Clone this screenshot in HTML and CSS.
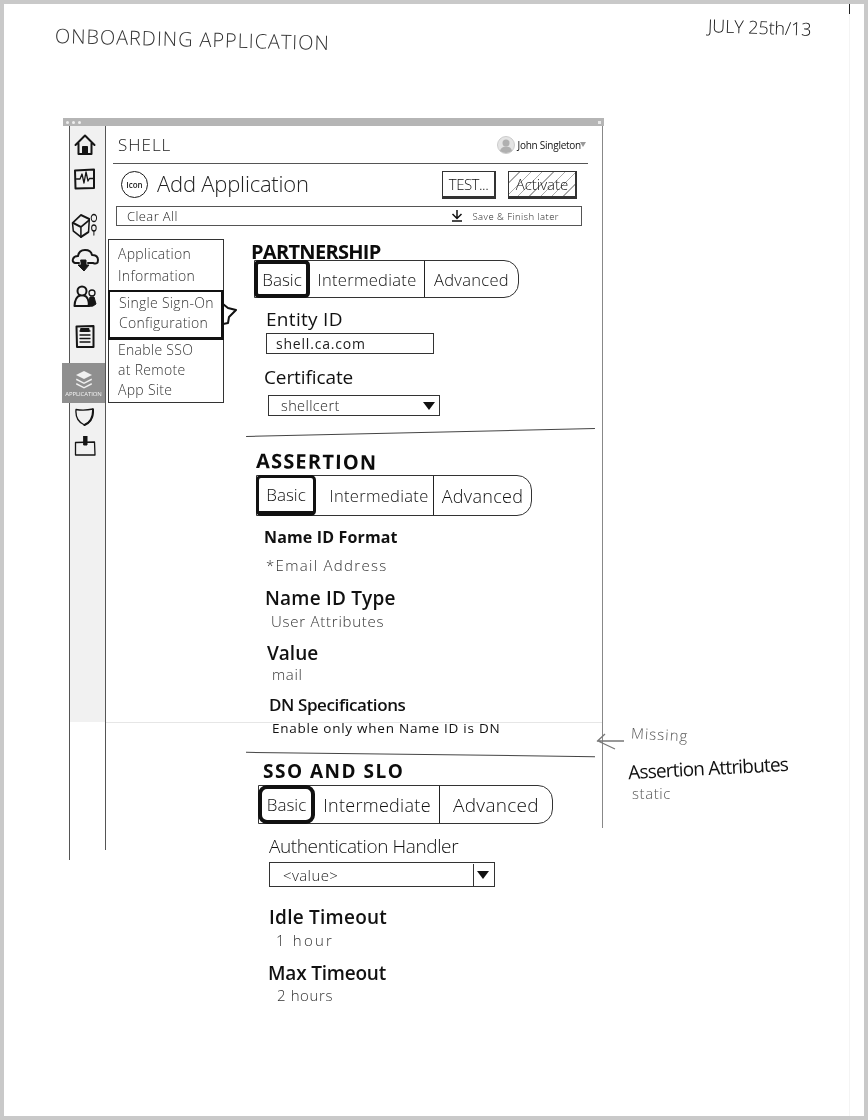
FILE: index.html
```html
<!DOCTYPE html>
<html lang="en">
<head>
<meta charset="utf-8">
<title>Onboarding Application sketch</title>
<link rel="stylesheet" href="styles.css">
</head>
<body>
<div class="paper">
  <i class="page-edge"></i>
  <header class="sheet-head">
    <div class="sheet-title">ONBOARDING APPLICATION</div>
    <div class="sheet-date">JULY 25th/13</div>
  </header>

  <div class="window">
    <div class="titlebar"><span class="dots"><i></i><i></i><i></i></span><i class="corner"></i></div>
    <div class="window-body">
      <nav class="rail">
        <svg class="ic ic-home" width="22" height="22" viewBox="0 0 22 22"><path d="M1.5 11 11 1.5 20.5 11M4.5 9.5V20H17.5V9.5"/><path class="fill" d="M8.5 20v-7.5h5V20z"/></svg>
        <svg class="ic ic-mon" width="23" height="22" viewBox="0 0 23 22"><path d="M2 2.5 21 1.5V20L2.5 20.5z"/><path class="thin" d="M3.5 11H7L9 6l2 9 2-11 2 9 1.500-2.500H20"/></svg>
        <svg class="ic ic-box" width="29" height="26" viewBox="0 0 38 26" preserveAspectRatio="none"><path d="M2 11 13 3 24 7 23 20 13 25 3 19z"/><path d="M3 11 13 15 24 8M13 15V25"/><circle class="thin" cx="30" cy="6" r="3.500"/><circle class="thin" cx="30" cy="16" r="3"/><path class="thin" d="M30 19v4"/></svg>
        <svg class="ic ic-cloud" width="28" height="24" viewBox="0 0 28 24"><path d="M8 15H4Q1 14 2 11T7 8Q8 2 14 2T21 7Q27 7 27 12T22 15H17"/><path class="fill" d="M10 12h5v5h3l-5 6-6-6h3z"/></svg>
        <svg class="ic ic-users" width="24" height="23" viewBox="0 0 24 23"><circle cx="9" cy="6" r="4.500"/><path d="M1.500 21Q2 12 7 10.500M11 10.500Q16 12 16 21H1.500"/><circle class="thin" cx="19" cy="8" r="3"/><path class="fill" d="M15 21 17 12h4l2 7-3 2z"/></svg>
        <svg class="ic ic-doc" width="20" height="23" viewBox="0 0 20 23"><path d="M1.500 1.500 18.500 1V22H2z"/><path class="thin" d="M5 6h10M5 10h10M5 13.500h10M5 17h10"/><path class="fill" d="M6 3.500h8v3H6z"/></svg>
        <a class="rail-active">
          <svg width="18" height="19" viewBox="0 0 18 19"><path class="lay" d="M9 1 17 5 9 9 1 5z"/><path class="lay" d="M1.500 8.500 9 12.500 16.500 8.500 17 10 9 14 1 10z"/><path class="lay" d="M1.500 13 9 17 16.500 13 17 14.500 9 18.500 1 14.500z"/></svg>
          <span>APPLICATION</span>
        </a>
        <svg class="ic ic-shield" width="19" height="18" viewBox="0 0 19 18"><path class="thin" d="M1 1.500Q9 3 18 1 19 13 9.500 17 0 13 1 1.500"/><path d="M18 1.500Q18.500 13 9.500 17"/></svg>
        <svg class="ic ic-exp" width="22" height="20" viewBox="0 0 22 20"><path class="thin" d="M1.500 6.500 20.500 6 21 19 1.500 19z"/><path class="fill" d="M10 0h3v9h-3z"/></svg>
      </nav>

      <main class="main">
        <div class="topbar">
          <span class="tenant">SHELL</span>
          <span class="user">
            <svg class="avatar" width="18" height="18" viewBox="0 0 18 18"><circle class="av-bg" cx="9" cy="9" r="8.500"/><circle class="av-fg" cx="9" cy="7" r="3.500"/><path class="av-fg" d="M3 15Q4 10.500 9 10.500T15 15Q9 19 3 15"/></svg>
            <span>John Singleton</span><i class="caret-sm"></i>
          </span>
        </div>

        <div class="title-row">
          <span class="app-icon">Icon</span>
          <h1>Add Application</h1>
          <span class="btns">
            <button class="btn btn-test">TEST...</button>
            <button class="btn btn-act">Activate</button>
          </span>
        </div>

        <div class="toolbar">
          <span class="clear">Clear All</span>
          <span class="save">
            <svg width="12" height="12" viewBox="0 0 12 12"><path d="M6 0v8M1.500 4 6 8.500 10.500 4M1 11h10"/></svg>
            <span>Save &amp; Finish later</span>
          </span>
        </div>

        <div class="content">
          <aside class="steps">
            <div class="step step-1">Application<br>Information</div>
            <div class="step step-2">Single Sign-On<br>Configuration<svg class="tip" width="15" height="24" viewBox="0 0 15 24"><path d="M0 2 5 6 13 8 6 15 5 21 0 22z"/></svg></div>
            <div class="step step-3">Enable SSO<br>at Remote<br>App Site</div>
          </aside>

          <div class="form">
            <section class="sec">
              <h2 class="h-part">PARTNERSHIP</h2>
              <div class="tabs tabs-part"><span class="tab tab-on t1">Basic</span><span class="tab t2">Intermediate</span><span class="tab t3">Advanced</span></div>
              <div class="label l-entity">Entity ID</div>
              <div class="input">shell.ca.com</div>
              <div class="label l-cert">Certificate</div>
              <div class="select s-cert"><span>shellcert</span><i class="caret"></i></div>
            </section>
            <hr class="rule r1">
            <section class="sec">
              <h2 class="h-asrt">ASSERTION</h2>
              <div class="tabs tabs-asrt"><span class="tab tab-on t1">Basic</span><span class="tab t2">Intermediate</span><span class="tab t3">Advanced</span></div>
              <div class="label bold l-fmt">Name ID Format</div>
              <div class="value v-fmt">*Email Address</div>
              <div class="label semi l-type">Name ID Type</div>
              <div class="value v-type">User Attributes</div>
              <div class="label semi l-val">Value</div>
              <div class="value v-val">mail</div>
              <div class="label semi l-dn">DN Specifications</div>
              <div class="value dark v-dn">Enable only when Name ID is DN</div>
            </section>
            <hr class="rule r2">
            <section class="sec">
              <h2 class="h-sso">SSO AND SLO</h2>
              <div class="tabs tabs-sso"><span class="tab tab-on t1">Basic</span><span class="tab t2">Intermediate</span><span class="tab t3">Advanced</span></div>
              <div class="label l-auth">Authentication Handler</div>
              <div class="select s-auth"><span>&lt;value&gt;</span><i class="caret caret-box"></i></div>
              <div class="label semi l-idle">Idle Timeout</div>
              <div class="value v-idle">1 hour</div>
              <div class="label semi l-max">Max Timeout</div>
              <div class="value v-max">2 hours</div>
            </section>
          </div>
        </div>
      </main>
    </div>
  </div>

  <svg class="note-arrow" width="30" height="20" viewBox="0 0 30 20"><path d="M28 8H2M9 1 1 8.500M2 8 19 16"/></svg>
  <div class="note n-miss">Missing</div>
  <div class="note n-attr">Assertion Attributes</div>
  <div class="note n-static">static</div>
</div>
</body>
</html>
```

FILE: styles.css
```css
* { box-sizing: border-box; }
html, body { margin: 0; padding: 0; }
body {
  width: 868px;
  height: 1120px;
  padding: 4px;
  background: #c9c9c9;
  overflow: hidden;
  font-family: "Open Sans", "Liberation Sans", sans-serif;
  color: #1c1c1c;
}
.paper {
  position: relative;
  width: 860px;
  height: 1112px;
  background: #fff;
  overflow: hidden;
  filter: blur(0.3px);
}
.page-edge {
  position: absolute;
  left: 845px;
  top: 0;
  width: 1px;
  height: 1112px;
  background: linear-gradient(#222 10px, #f4f4f4 10px);
}

/* sheet heading */
.sheet-head {
  display: flex;
  justify-content: space-between;
  align-items: flex-start;
  height: 114px;
  padding: 11px 53px 0 51px;
}
.sheet-title {
  margin-top: 9px;
  font-size: 20px;
  font-weight: 300;
  line-height: 24px;
  letter-spacing: 0.9px;
  color: #333;
  transform: rotate(1.5deg);
  transform-origin: left center;
}
.sheet-date {
  font-size: 18px;
  font-weight: 300;
  line-height: 24px;
  letter-spacing: -0.1px;
  color: #111;
  transform: rotate(2deg);
}

/* window */
.window {
  position: relative;
  width: 541px;
  margin-left: 59px;
}
.window::after {
  content: "";
  position: absolute;
  right: 1px;
  top: 8px;
  width: 1px;
  height: 702px;
  background: #888;
}
.window::before {
  content: "";
  position: absolute;
  left: 43px;
  right: 1px;
  top: 604px;
  height: 1px;
  background: #e6e6e6;
}
.titlebar {
  display: flex;
  justify-content: space-between;
  align-items: center;
  height: 8px;
  padding: 0 3px;
  background: #b5b5b5;
}
.dots { display: flex; gap: 3px; }
.dots i { width: 3px; height: 3px; background: #efefef; border-radius: 50%; }
.corner { width: 3px; height: 3px; background: #e8e8e8; }
.window-body { display: flex; align-items: flex-start; }

/* rail */
.rail {
  position: relative;
  flex: none;
  display: flex;
  flex-direction: column;
  align-items: center;
  width: 37px;
  height: 734px;
  margin-left: 6px;
  padding: 8px 7px 0 0;
  border-left: 1px solid #555;
  background: linear-gradient(#f1f1f1 596px, #fff 596px);
}
.rail::after {
  content: "";
  position: absolute;
  right: 0;
  top: 0;
  width: 1px;
  height: 724px;
  background: #555;
}
.ic { flex: none; fill: none; stroke: #151515; stroke-width: 2; stroke-linejoin: round; stroke-linecap: round; }
.ic .thin { stroke-width: 1.3; }
.ic .fill { fill: #151515; stroke-width: 1; }
.ic-mon { margin-top: 12px; }
.ic-box { margin-top: 22px; margin-right: -1px; }
.ic-cloud { margin-top: 10px; }
.ic-users { margin-top: 13px; }
.ic-doc { margin-top: 17px; }
.rail-active {
  flex: none;
  display: flex;
  flex-direction: column;
  align-items: center;
  width: 43px;
  height: 40px;
  margin: 15px -7px 0 -7px;
  padding-top: 7px;
  background: #8f8f8f;
  position: relative;
  left: -1px;
}
.rail-active .lay { fill: #f1f1f1; }
.rail-active span {
  margin-top: 1px;
  font-size: 6px;
  line-height: 8px;
  color: #f4f4f4;
  letter-spacing: -0.1px;
  white-space: nowrap;
}
.ic-shield { margin-top: 5px; }
.ic-exp { margin-top: 10px; }

/* main column */
.main { flex: 1; min-width: 0; }
.topbar {
  display: flex;
  justify-content: space-between;
  align-items: center;
  height: 38px;
  margin: 0 16px 0 7px;
  padding: 0 2px 0 5px;
  border-bottom: 1px solid #555;
}
.tenant {
  font-size: 17px;
  font-weight: 300;
  letter-spacing: 1px;
}
.user { display: flex; align-items: center; gap: 3px; font-size: 10px; letter-spacing: -0.25px; color: #111; }
.av-bg { fill: #e4e4e4; stroke: #ccc; }
.av-fg { fill: #b0b0b0; }
.caret-sm { width: 0; height: 0; border: 3px solid transparent; border-top: 5px solid #999; margin-top: 3px; margin-left: -4px; }

.title-row {
  display: flex;
  align-items: center;
  height: 41px;
  margin: 0 27px 0 15px;
}
.app-icon {
  flex: none;
  display: flex;
  align-items: center;
  justify-content: center;
  width: 27px;
  height: 27px;
  border: 1.500px solid #1a1a1a;
  border-radius: 50%;
  font-size: 8px;
  font-weight: 600;
}
h1 {
  margin: 0 0 3px 9px;
  font-size: 22px;
  font-weight: 300;
  letter-spacing: -0.2px;
  color: #222;
  white-space: nowrap;
}
.btns { margin-left: auto; display: flex; gap: 12px; }
.btn {
  height: 28px;
  padding: 0;
  font-family: inherit;
  font-size: 15px;
  font-weight: 300;
  color: #111;
  background: #fff;
  border: 1px solid #333;
  border-right-width: 2px;
  border-bottom-width: 3px;
  border-radius: 0;
}
.btn-test { width: 54px; letter-spacing: -0.5px; }
.btn-act {
  width: 69px;
  background: repeating-linear-gradient(135deg, #fff 0 7px, #aaa 7px 8px);
}

.toolbar {
  display: flex;
  justify-content: space-between;
  align-items: center;
  height: 20px;
  margin: 1px 22px 0 10px;
  padding: 0 22px 0 10px;
  border: 1px solid #555;
  font-size: 12px;
  font-weight: 300;
}
.clear { letter-spacing: 0.4px; font-size: 13px; }
.save { display: flex; align-items: center; gap: 9px; font-size: 9.500px; letter-spacing: 0.45px; }
.save svg { fill: none; stroke: #111; stroke-width: 1.500; }

.content { display: flex; margin-top: 13px; }

/* wizard steps */
.steps {
  flex: none;
  width: 116px;
  height: 164px;
  margin-left: 2px;
  border: 1px solid #333;
  border-bottom-width: 1.500px;
  font-size: 14px;
  font-weight: 300;
  line-height: 22px;
  color: #333;
}
.step { padding-left: 9px; letter-spacing: 0.3px; }
.step-1 { height: 50px; padding-top: 3px; }
.step-2 {
  position: relative;
  height: 50px;
  margin: 0 -1px 0 -1px;
  padding-top: 1px;
  line-height: 20px;
  border: 2px solid #111;
  border-right-width: 3px;
  border-bottom-width: 3px;
}
.step-3 { padding-top: 0; line-height: 20px; }
.tip {
  position: absolute;
  left: 100%;
  top: 10px;
  margin-left: 2px;
  fill: #fff;
  stroke: #111;
  stroke-width: 2;
  stroke-linejoin: round;
}

/* form */
.form { flex: none; width: 349px; margin-left: 22px; }
.sec { display: block; }
h2 {
  margin: 0;
  font-size: 20px;
  font-weight: 700;
  line-height: 20px;
  color: #0c0c0c;
  white-space: nowrap;
}
.h-part { margin: 3px 0 -2px; padding-left: 5px; letter-spacing: -0.7px; }
.h-asrt { margin-top: 18px; height: 22px; padding-left: 10px; letter-spacing: 1.200px; transform: rotate(0.7deg); transform-origin: left; }
.h-sso { margin-top: 6px; padding-left: 17px; font-size: 19px; letter-spacing: 1.500px; }

.tabs {
  display: flex;
  border: 1px solid #333;
  border-radius: 0 15px 15px 0;
  font-size: 16.500px;
  font-weight: 300;
  color: #111;
}
.tab { display: flex; align-items: center; justify-content: center; height: 100%; border-right: 1px solid #222; letter-spacing: 0.3px; white-space: nowrap; }
.tab.t3 { border-right: 0; flex: 1; }
.tab-on {
  flex: none;
  border: 4px solid #111;
  border-radius: 5px;
  margin: -1px 0 -1px -1px;
  height: auto;
  font-size: 17px;
  letter-spacing: 0;
}
.tabs-part { width: 265px; height: 38px; margin-left: 8px; }
.tabs-part .t1 { width: 56px; }
.tabs-part .t2 { width: 115px; }
.tabs-asrt { width: 276px; height: 41px; margin: 2px 0 0 10px; }
.tabs-asrt .t1 { width: 60px; border-width: 3px 3px 5px 3px; }
.tabs-asrt .t2 { width: 118px; padding-left: 9px; }
.tabs-asrt .t3 { font-size: 18px; }
.tabs-sso { width: 295px; height: 39px; margin: 4px 0 0 12px; }
.tabs-sso .t1 { width: 57px; border-radius: 9px; }
.tabs-sso .t2 { width: 125px; font-size: 18px; }
.tabs-sso .t3 { font-size: 19px; }

.label { font-size: 19px; font-weight: 400; line-height: 20px; color: #111; white-space: nowrap; }
.label.bold { font-weight: 700; font-size: 16px; letter-spacing: 0.15px; }
.label.semi { font-weight: 600; }
.value { font-size: 15px; font-weight: 300; line-height: 18px; color: #333; white-space: nowrap; letter-spacing: 0.6px; }
.value.dark { font-weight: 400; font-size: 13.500px; letter-spacing: 0.75px; color: #111; }

.l-entity { margin: 11px 0 0 20px; height: 20px; letter-spacing: 0.3px; }
.input {
  display: flex;
  align-items: center;
  width: 168px;
  height: 21px;
  margin: 4px 0 0 20px;
  padding-left: 9px;
  border: 1px solid #333;
  font-size: 14px;
  letter-spacing: 0.8px;
}
.l-cert { margin: 12px 0 0 18px; height: 23px; line-height: 23px; letter-spacing: -0.1px; }
.select {
  display: flex;
  align-items: center;
  justify-content: space-between;
  border: 1px solid #333;
  font-size: 14.500px;
  font-weight: 300;
  letter-spacing: 0.4px;
}
.s-cert { width: 172px; height: 21px; margin: 6px 0 0 22px; padding: 0 4px 0 12px; }
.s-auth { width: 226px; height: 25px; margin: 4px 0 0 23px; padding: 0 5px 0 13px; font-size: 15px; }
.caret { width: 0; height: 0; border: 6px solid transparent; border-top: 8px solid #111; border-bottom: 0; }
.caret-box { position: relative; }
.caret-box::before {
  content: "";
  position: absolute;
  left: -10px;
  top: -15px;
  width: 1px;
  height: 22px;
  background: #333;
}

.rule { height: 1px; margin: 16px 0 0; border: 0; background: #444; }
.r1 { transform: rotate(-1.3deg); }
.r2 { margin-top: 17px; transform: rotate(0.7deg); }

.l-fmt { margin: 12px 0 0 18px; height: 18px; line-height: 18px; }
.v-fmt { margin: 9px 0 0 20px; height: 20px; line-height: 20px; letter-spacing: 1.300px; }
.l-type { margin: 13px 0 0 19px; letter-spacing: 0.2px; }
.v-type { margin: 4px 0 0 25px; letter-spacing: 0.75px; }
.l-val { margin: 13px 0 0 21px; height: 19px; }
.v-val { margin: 4px 0 0 26px; height: 16px; line-height: 16px; }
.l-dn { margin: 13px 0 0 23px; height: 19px; font-size: 17px; font-weight: 400; letter-spacing: -0.4px; }
.v-dn { margin: 6px 0 0 26px; height: 17px; line-height: 17px; }
.l-auth { margin: 11px 0 0 23px; height: 23px; line-height: 23px; font-weight: 300; letter-spacing: -0.4px; }
.l-idle { margin: 19px 0 0 23px; height: 22px; line-height: 22px; letter-spacing: 0.25px; }
.v-idle { margin: 4px 0 0 30px; height: 16px; line-height: 16px; letter-spacing: 2.200px; }
.l-max { margin: 14px 0 0 22px; height: 23px; line-height: 23px; letter-spacing: -0.2px; }
.v-max { margin: 1px 0 0 31px; height: 19px; line-height: 19px; }

/* annotations on the paper */
.note-arrow {
  position: absolute;
  left: 592px;
  top: 729px;
  fill: none;
  stroke: #777;
  stroke-width: 1.300;
}
.note { position: absolute; font-weight: 300; white-space: nowrap; }
.n-miss { left: 627px; top: 720px; font-size: 15px; letter-spacing: 1px; color: #555; transform: rotate(3deg); }
.n-attr { left: 624px; top: 751px; font-size: 19px; font-weight: 400; letter-spacing: -0.8px; color: #111; transform: rotate(-3deg); }
.n-static { left: 628px; top: 779px; font-size: 15px; color: #555; letter-spacing: 0.6px; }
```
